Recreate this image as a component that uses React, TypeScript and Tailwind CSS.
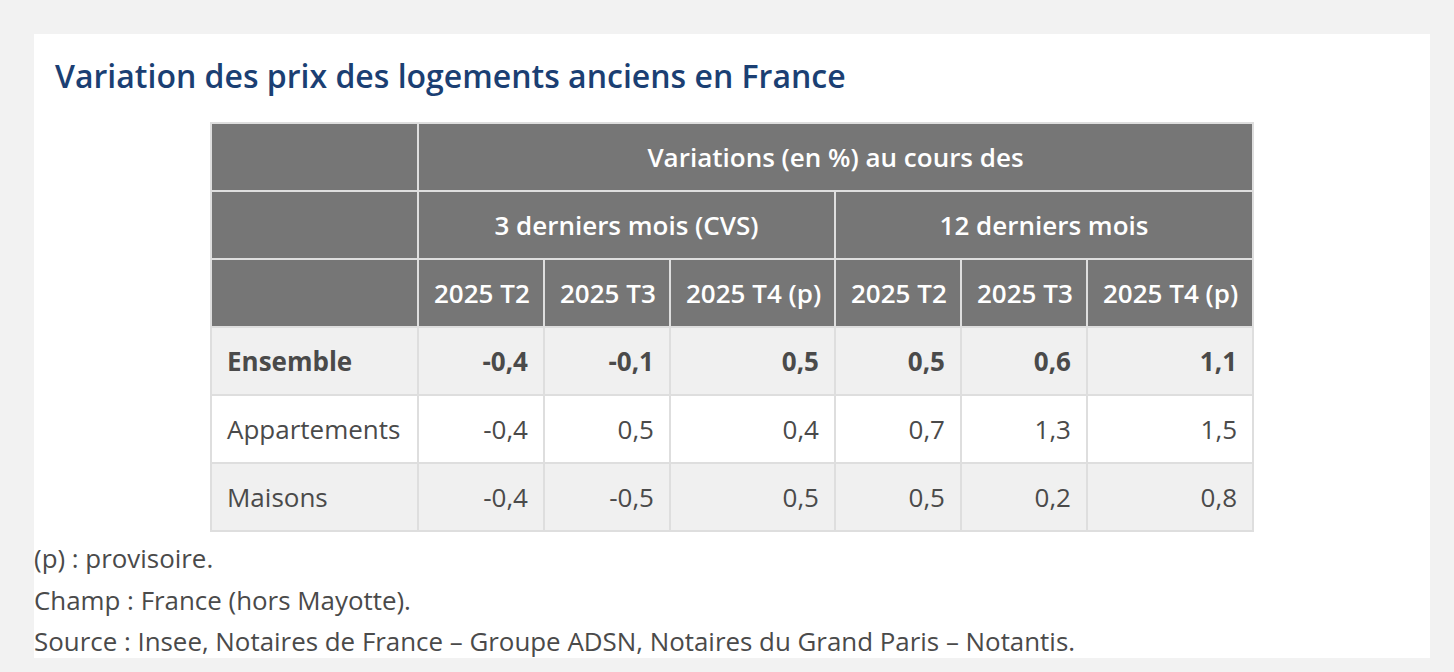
import React from "react"

const font = { fontFamily: '"Open Sans", "Noto Sans", sans-serif' }

type Row = { label: string; values: string[]; bold?: boolean; shaded?: boolean }

const rows: Row[] = [
  { label: "Ensemble", values: ["-0,4", "-0,1", "0,5", "0,5", "0,6", "1,1"], bold: true, shaded: true },
  { label: "Appartements", values: ["-0,4", "0,5", "0,4", "0,7", "1,3", "1,5"] },
  { label: "Maisons", values: ["-0,4", "-0,5", "0,5", "0,5", "0,2", "0,8"], shaded: true },
]

const periods = ["2025 T2", "2025 T3", "2025 T4 (p)", "2025 T2", "2025 T3", "2025 T4 (p)"]

const th = "border-2 border-[#dedede] bg-[#767676] text-white font-semibold text-center h-[68px] px-[15px]"
const td = "border-2 border-[#dedede] h-[68px] px-[15px]"

export default function App() {
  return (
    <div className="min-h-screen bg-[#f2f2f2] pt-[34px]" style={font}>
      <div className="flex flex-col ml-[34px] w-[1396px] bg-white pt-[20px]">
        <h1 className="pl-[21px] text-[32px] leading-[44px] font-semibold text-[#1b3f73] mb-[24px]">
          Variation des prix des logements anciens en France
        </h1>

        <table className="mx-auto w-[1044px] table-fixed border-collapse border-2 border-[#dedede] text-[26px] text-[#4a4a4a]">
          <colgroup>
            <col className="w-[207px]" />
            <col className="w-[126px]" />
            <col className="w-[126px]" />
            <col className="w-[165px]" />
            <col className="w-[126px]" />
            <col className="w-[126px]" />
            <col className="w-[166px]" />
          </colgroup>
          <thead>
            <tr>
              <th className={th} />
              <th className={th} colSpan={6}>
                Variations (en %) au cours des
              </th>
            </tr>
            <tr>
              <th className={th} />
              <th className={th} colSpan={3}>
                3 derniers mois (CVS)
              </th>
              <th className={th} colSpan={3}>
                12 derniers mois
              </th>
            </tr>
            <tr>
              <th className={th} />
              {periods.map((p, i) => (
                <th key={i} className={th + " whitespace-nowrap"}>
                  {p}
                </th>
              ))}
            </tr>
          </thead>
          <tbody>
            {rows.map((r) => (
              <tr key={r.label} className={r.shaded ? "bg-[#f0f0f0]" : "bg-white"}>
                <td className={td + " text-left" + (r.bold ? " font-bold" : "")}>{r.label}</td>
                {r.values.map((v, i) => (
                  <td key={i} className={td + " text-right" + (r.bold ? " font-bold" : "")}>
                    {v}
                  </td>
                ))}
              </tr>
            ))}
          </tbody>
        </table>

        <div className="mt-[6px] -mb-[5px] text-[25.9px] leading-[41.5px] text-[#4a4a4a]">
          <p>(p) : provisoire.</p>
          <p>Champ : France (hors Mayotte).</p>
          <p>Source : Insee, Notaires de France – Groupe ADSN, Notaires du Grand Paris – Notantis.</p>
        </div>
      </div>
    </div>
  )
}
